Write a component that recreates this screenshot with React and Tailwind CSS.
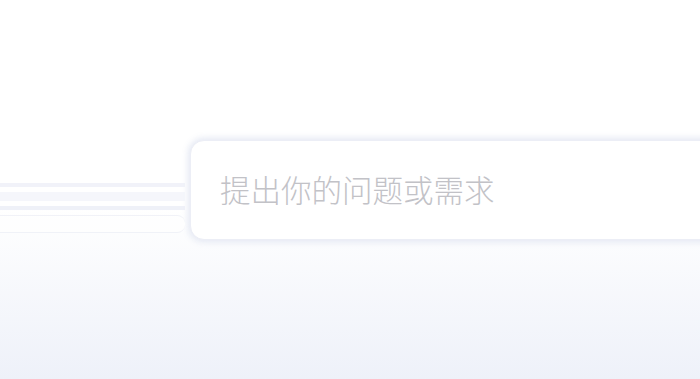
import React from 'react';

function App() {
  return (
    <div className="relative w-[700px] h-[379px] overflow-hidden bg-gradient-to-b from-white from-[55%] to-[#eef1f9]">
      {/* faint ghost input behind, blurred */}
      <div className="absolute left-0 top-[183px] w-[185px] h-[55px] flex flex-col gap-[5px] opacity-80">
        <div className="h-[4px] bg-[#eef0f8]" />
        <div className="h-[9px] bg-[#f3f5fb]" />
        <div className="h-[4px] bg-[#eceef7]" />
        <div className="h-[18px] bg-white border-y border-[#eef0f7] rounded-r-lg" />
      </div>

      <div className="pt-[140px] pl-[190px]">
        <div className="w-[560px] h-[100px] rounded-[14px] bg-white border border-[#eceef6] shadow-[0_0_6px_2px_rgba(225,229,242,0.9)] flex items-center pl-[29px]">
          <span className="text-[30.5px] font-light leading-none text-[#c2c2c7] font-['Noto_Sans_CJK_SC',sans-serif] -mt-[1px]">
            提出你的问题或需求
          </span>
        </div>
      </div>
    </div>
  );
}

export default App;
